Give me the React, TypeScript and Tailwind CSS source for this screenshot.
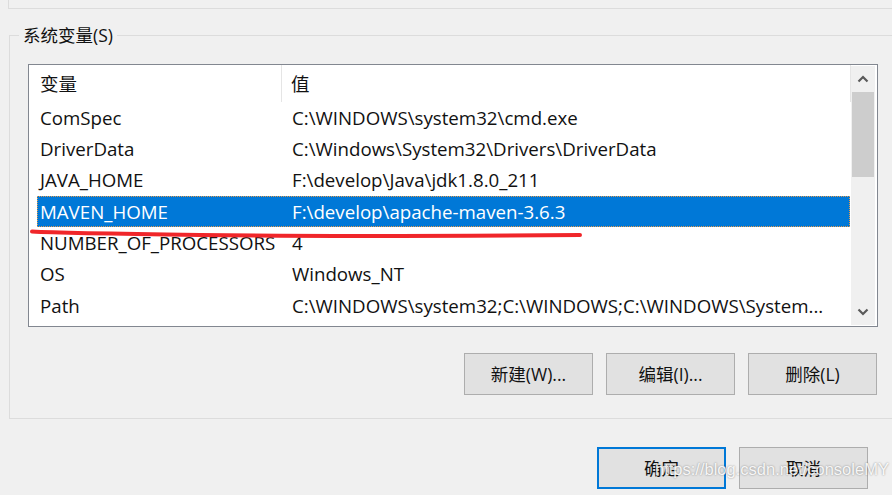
import { type FC, type ReactElement } from "react";

const rows: Array<[string, string]> = [
  ["ComSpec", "C:\\WINDOWS\\system32\\cmd.exe"],
  ["DriverData", "C:\\Windows\\System32\\Drivers\\DriverData"],
  ["JAVA_HOME", "F:\\develop\\Java\\jdk1.8.0_211"],
  ["MAVEN_HOME", "F:\\develop\\apache-maven-3.6.3"],
  ["NUMBER_OF_PROCESSORS", "4"],
  ["OS", "Windows_NT"],
  ["Path", "C:\\WINDOWS\\system32;C:\\WINDOWS;C:\\WINDOWS\\System..."],
];

const font = "font-['Open_Sans','Noto_Sans_CJK_SC',sans-serif]";

const WinButton: FC<{ label: string; primary?: boolean }> = ({ label, primary }): ReactElement => (
  <button
    className={`w-[129px] h-[42px] flex items-center justify-center bg-[#e1e1e1] text-[17.5px] text-[#111] ${
      primary ? "border-2 border-[#0078d7]" : "border border-[#adadad]"
    }`}
  >
    {label}
  </button>
);

const App: FC = (): ReactElement => {
  const selected = 3;

  return (
    <div className={`relative w-[892px] h-[495px] overflow-hidden bg-[#f0f0f0] ${font}`}>
      {/* upper group box edge */}
      <div className="ml-[8px] h-[9px] border-l border-b border-[#dcdcdc]" />

      {/* system variables group */}
      <div className="relative ml-[9px] mt-[26px] w-[900px] h-[384px] border-l border-t border-b border-[#dcdcdc]">
        <span className="absolute left-[9px] top-[-13px] px-[4px] bg-[#f0f0f0] text-[17.5px] leading-[24px] text-[#111]">
          系统变量(S)
        </span>

        <div className="pl-[18px] pt-[28px]">
          <div className="flex w-[850px] h-[263px] border border-[#828790] bg-white">
            <div className="flex-1 flex flex-col">
              {/* header */}
              <div className="flex items-center h-[37px] text-[18.5px] text-[#111]">
                <div className="w-[253px] h-full flex items-center pl-[11px] border-r border-[#e5e5e5]">变量</div>
                <div className="flex-1 h-full flex items-center pl-[9px] border-r border-[#e5e5e5]">值</div>
              </div>
              {rows.map(([name, value], i) => (
                <div key={name} className="h-[31.33px] pl-[8px] pr-[1px] flex">
                  <div
                    className={`flex-1 flex items-center text-[18.7px] ${
                      i === selected
                        ? "bg-[#0078d7] text-white outline-1 outline-dotted outline-[#e39a4c] -outline-offset-1"
                        : "text-[#111]"
                    }`}
                  >
                    <span className="w-[255px] pl-[3px] whitespace-nowrap">{name}</span>
                    <span className="whitespace-nowrap">{value}</span>
                  </div>
                </div>
              ))}
            </div>

            {/* scrollbar */}
            <div className="w-[24px] mr-[2px] my-[1px] flex flex-col bg-[#f0f0f0]">
              <div className="h-[26px] flex items-center justify-center">
                <svg width="12" height="8" viewBox="0 0 12 8">
                  <path d="M1.5 6.5 L6 2 L10.5 6.5" fill="none" stroke="#5a5a5a" strokeWidth="2.2" />
                </svg>
              </div>
              <div className="mx-[1px] h-[85px] bg-[#cdcdcd]" />
              <div className="flex-1" />
              <div className="h-[26px] flex items-center justify-center">
                <svg width="12" height="8" viewBox="0 0 12 8">
                  <path d="M1.5 1.5 L6 6 L10.5 1.5" fill="none" stroke="#5a5a5a" strokeWidth="2.2" />
                </svg>
              </div>
            </div>
          </div>

          <div className="w-[849px] flex justify-end gap-[13px] mt-[26px]">
            <WinButton label="新建(W)..." />
            <WinButton label="编辑(I)..." />
            <WinButton label="删除(L)" />
          </div>
        </div>
      </div>

      {/* dialog buttons */}
      <div className="flex justify-end gap-[13px] pr-[24px] mt-[28px]">
        <WinButton label="确定" primary />
        <WinButton label="取消" />
      </div>

      {/* red hand-drawn underline */}
      <svg className="absolute left-0 top-0 pointer-events-none" width="892" height="495">
        <path
          d="M32 231.5 Q 60 233 200 235 T 580 235"
          fill="none"
          stroke="#f0262a"
          strokeWidth="4"
          strokeLinecap="round"
        />
      </svg>

      {/* watermark */}
      <span className="absolute left-[655px] top-[457px] font-['Liberation_Sans',sans-serif] text-[16.5px] text-white/90 [text-shadow:0_0_2px_rgba(0,0,0,0.45)] whitespace-nowrap">
        https://blog.csdn.net/consoleMY
      </span>
    </div>
  );
};

export default App;
